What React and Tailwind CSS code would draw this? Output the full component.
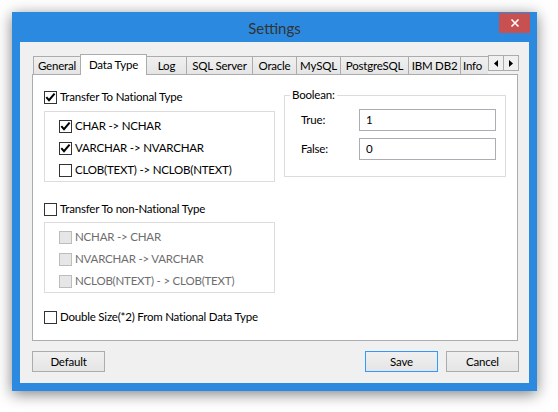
import React from "react";

function Check({ checked, disabled }) {
  return (
    <span
      className={
        disabled
          ? "w-[13px] h-[13px] border border-[#bcbcbc] bg-[#e6e6e6] flex items-center justify-center shrink-0"
          : "w-[13px] h-[13px] border border-[#333333] bg-white flex items-center justify-center shrink-0"
      }
    >
      {checked && (
        <svg width="11" height="11" viewBox="0 0 11 11">
          <path d="M1.3 5.2 L4 8.2 L9.6 1.6" fill="none" stroke="#000" strokeWidth="2" />
        </svg>
      )}
    </span>
  );
}

function Row({ label, checked, disabled, h = "h-[22px]" }) {
  return (
    <div className={`${h} flex items-center gap-[3px] whitespace-nowrap`}>
      <Check checked={checked} disabled={disabled} />
      <span className={disabled ? "text-[#6d6d6d]" : "text-black"}>{label}</span>
    </div>
  );
}

const tabs = [
  ["General", "w-[48px]"],
  ["Data Type", "w-[67px]", true],
  ["Log", "w-[41px]"],
  ["SQL Server", "w-[67px]"],
  ["Oracle", "w-[45px]"],
  ["MySQL", "w-[45px]"],
  ["PostgreSQL", "w-[69px]"],
  ["IBM DB2", "w-[53px]"],
];

function Button({ children, primary }) {
  return (
    <div
      className={
        primary
          ? "w-[73px] h-[21px] border border-[#3399ff] bg-gradient-to-b from-[#f0f0f0] to-[#e5e5e5] flex items-center justify-center text-black"
          : "w-[73px] h-[21px] border border-[#acacac] bg-gradient-to-b from-[#f0f0f0] to-[#e5e5e5] flex items-center justify-center text-black"
      }
    >
      {children}
    </div>
  );
}

export default function App() {
  return (
    <div className="w-[558px] h-[412px] bg-white pt-[12px] pl-[12px] font-['Lato',sans-serif] text-[11.5px] tracking-[-0.2px] leading-[16px]">
      <div className="w-[525px] h-[379px] bg-[#2b8ae0] flex flex-col shadow-[0_3px_14px_rgba(0,0,0,0.5)]">
        {/* title bar */}
        <div className="h-[30px] grid grid-cols-[1fr_auto_1fr]">
          <div />
          <div className="text-[15px] tracking-normal leading-[20px] pt-[6px] text-[#333333]">Settings</div>
          <div className="flex justify-end pr-[7px] pt-[1px]">
            <div className="w-[31px] h-[20px] bg-[#c75050] flex items-center justify-center">
              <svg width="10" height="10" viewBox="0 0 10 10">
                <path d="M1.5 1.5 L8.5 8.5 M8.5 1.5 L1.5 8.5" stroke="#fff" strokeWidth="1.6" />
              </svg>
            </div>
          </div>
        </div>
        {/* client */}
        <div className="mx-[8px] h-[341px] bg-[#f0f0f0] pt-[12px] pl-[12px]">
          {/* tabs */}
          <div className="h-[20px] w-[487px] flex items-end pl-[1px] whitespace-nowrap">
            {tabs.map(([t, w, sel], i) =>
              sel ? (
                <div
                  key={t}
                  className={`${w} h-[21px] -mb-px -ml-px relative z-10 bg-white border-l border-t border-r border-[#acacac] flex items-start justify-center pt-[2px]`}
                >
                  {t}
                </div>
              ) : (
                <div
                  key={t}
                  className={`${w} h-[18px] ${i === 0 ? "" : "-ml-px"} bg-gradient-to-b from-[#f0f0f0] to-[#e5e5e5] border-l border-t border-r border-[#acacac] flex items-center justify-center`}
                >
                  {t}
                </div>
              )
            )}
            <div className="w-[28px] -ml-px h-[18px] bg-gradient-to-b from-[#f0f0f0] to-[#e5e5e5] border-l border-t border-[#acacac] pl-[2px] flex items-center overflow-hidden">
              Info
            </div>
            <div className="flex mb-[3px] self-end">
              <div className="w-[16px] h-[16px] border border-[#acacac] bg-[#f0f0f0] flex items-center justify-center">
                <svg width="4" height="7" viewBox="0 0 4 7">
                  <path d="M4 0 L0 3.5 L4 7 Z" fill="#000" />
                </svg>
              </div>
              <div className="w-[16px] h-[16px] -ml-px border border-[#acacac] bg-[#f0f0f0] flex items-center justify-center">
                <svg width="4" height="7" viewBox="0 0 4 7">
                  <path d="M0 0 L4 3.5 L0 7 Z" fill="#000" />
                </svg>
              </div>
            </div>
          </div>
          {/* panel */}
          <div className="w-[486px] h-[267px] bg-white border border-[#acacac] pt-[12px] pl-[11px] flex gap-[9px]">
            <div className="w-[231px] flex flex-col">
              <Row label="Transfer To National Type" checked h="h-[20px]" />
              <div className="mt-[4px] h-[71px] border border-[#dcdcdc] pt-[3px] pl-[14px]">
                <Row label="CHAR -> NCHAR" checked />
                <Row label="VARCHAR -> NVARCHAR" checked />
                <Row label="CLOB(TEXT) -> NCLOB(NTEXT)" />
              </div>
              <div className="mt-[17px]">
                <Row label="Transfer To non-National Type" h="h-[20px]" />
              </div>
              <div className="mt-[3px] h-[71px] border border-[#dcdcdc] pt-[3px] pl-[14px]">
                <Row label="NCHAR -> CHAR" disabled />
                <Row label="NVARCHAR -> VARCHAR" disabled />
                <Row label="NCLOB(NTEXT) - > CLOB(TEXT)" disabled />
              </div>
              <div className="mt-[14px]">
                <Row label="Double Size(*2) From National Data Type" h="h-[20px]" />
              </div>
            </div>
            <fieldset className="w-[222px] h-[90px] border border-[#dcdcdc]">
              <legend className="ml-[5px] px-[2px] leading-[16px]">Boolean:</legend>
              <div className="pl-[16px] pt-[6px]">
                <div className="flex items-center h-[22px]">
                  <span className="w-[58px]">True:</span>
                  <div className="w-[137px] h-[22px] border border-[#abadb3] bg-white pl-[6px] flex items-center">1</div>
                </div>
                <div className="flex items-center h-[22px] mt-[7px]">
                  <span className="w-[58px]">False:</span>
                  <div className="w-[137px] h-[22px] border border-[#abadb3] bg-white pl-[6px] flex items-center">0</div>
                </div>
              </div>
            </fieldset>
          </div>
          {/* buttons */}
          <div className="mt-[10px] w-[487px] flex">
            <Button>Default</Button>
            <div className="flex-1" />
            <Button primary>Save</Button>
            <div className="w-[8px]" />
            <Button>Cancel</Button>
          </div>
        </div>
      </div>
    </div>
  );
}
